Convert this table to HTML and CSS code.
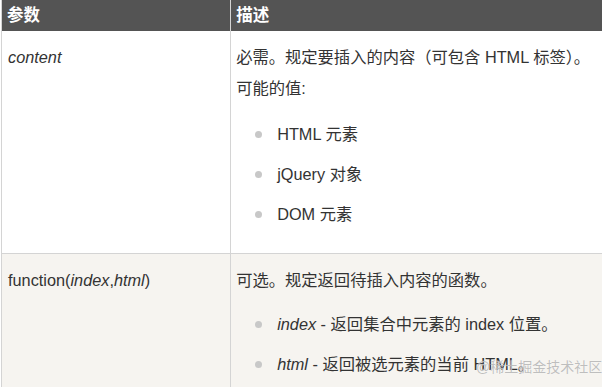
FILE: index.html
```html
<!DOCTYPE html>
<html lang="zh-CN">
<head>
<meta charset="utf-8">
<title>参数</title>
<link rel="stylesheet" href="styles.css">
</head>
<body>
<div class="page">
  <table class="ref">
    <colgroup>
      <col class="col-param">
      <col class="col-desc">
    </colgroup>
    <thead>
      <tr>
        <th>参数</th>
        <th>描述</th>
      </tr>
    </thead>
    <tbody>
      <tr>
        <td><i>content</i></td>
        <td>
          <p>必需。规定要插入的内容（可包含 HTML 标签）。</p>
          <p>可能的值:</p>
          <ul class="values">
            <li>HTML 元素</li>
            <li>jQuery 对象</li>
            <li>DOM 元素</li>
          </ul>
        </td>
      </tr>
      <tr class="alt">
        <td>function(<i>index</i>,<i>html</i>)</td>
        <td>
          <p>可选。规定返回待插入内容的函数。</p>
          <ul class="values">
            <li><i>index</i> - 返回集合中元素的 index 位置。</li>
            <li><i>html</i> - 返回被选元素的当前 HTML。</li>
          </ul>
        </td>
      </tr>
    </tbody>
  </table>
  <div class="watermark">@稀土掘金技术社区</div>
</div>
</body>
</html>
```
FILE: styles.css
```css
html, body {
  margin: 0;
  padding: 0;
  background: #ffffff;
  overflow: hidden;
}

.page {
  position: relative;
  width: 602px;
  height: 387px;
  overflow: hidden;
  padding-left: 1px;
  box-sizing: border-box;
  font-family: "Liberation Sans", "Noto Sans CJK SC", sans-serif;
  font-size: 16.3px;
  color: #333333;
}

.ref {
  border-collapse: collapse;
  table-layout: fixed;
  width: 720px;
  border-left: 1px solid #d4d4d4;
}

.col-param { width: 229px; }
.col-desc { width: 490px; }

.ref th {
  background: #545454;
  color: #ffffff;
  font-weight: bold;
  font-size: 16.5px;
  text-align: left;
  height: 31px;
  padding: 0 5px;
  line-height: 31px;
  box-sizing: border-box;
}

.ref td {
  vertical-align: top;
  padding: 11px 6px 23px 6px;
  line-height: 31px;
}

.ref td + td,
.ref th + th {
  border-left: 1px solid #d4d4d4;
}

.ref td + td { padding-left: 5px; }

.ref tr.alt td {
  background: #f6f4f0;
  border-top: 1px solid #d4d4d4;
}

.ref p {
  margin: 0;
}

.values {
  list-style: none;
  margin: 15px 0 0 0;
  padding: 0 0 0 41px;
}

.alt .values {
  margin-top: 13px;
}

.values li + li {
  margin-top: 9px;
}

.values li::before {
  content: "";
  display: inline-block;
  width: 7px;
  height: 7px;
  border-radius: 50%;
  background: #c8c8c8;
  margin-left: -22px;
  margin-right: 15px;
  vertical-align: 2px;
}

.watermark {
  position: absolute;
  left: 476px;
  top: 358px;
  font-size: 14px;
  line-height: 18px;
  color: rgba(170, 170, 170, 0.75);
  text-shadow: 0 0 1px rgba(255, 255, 255, 0.9);
  white-space: nowrap;
}
```
